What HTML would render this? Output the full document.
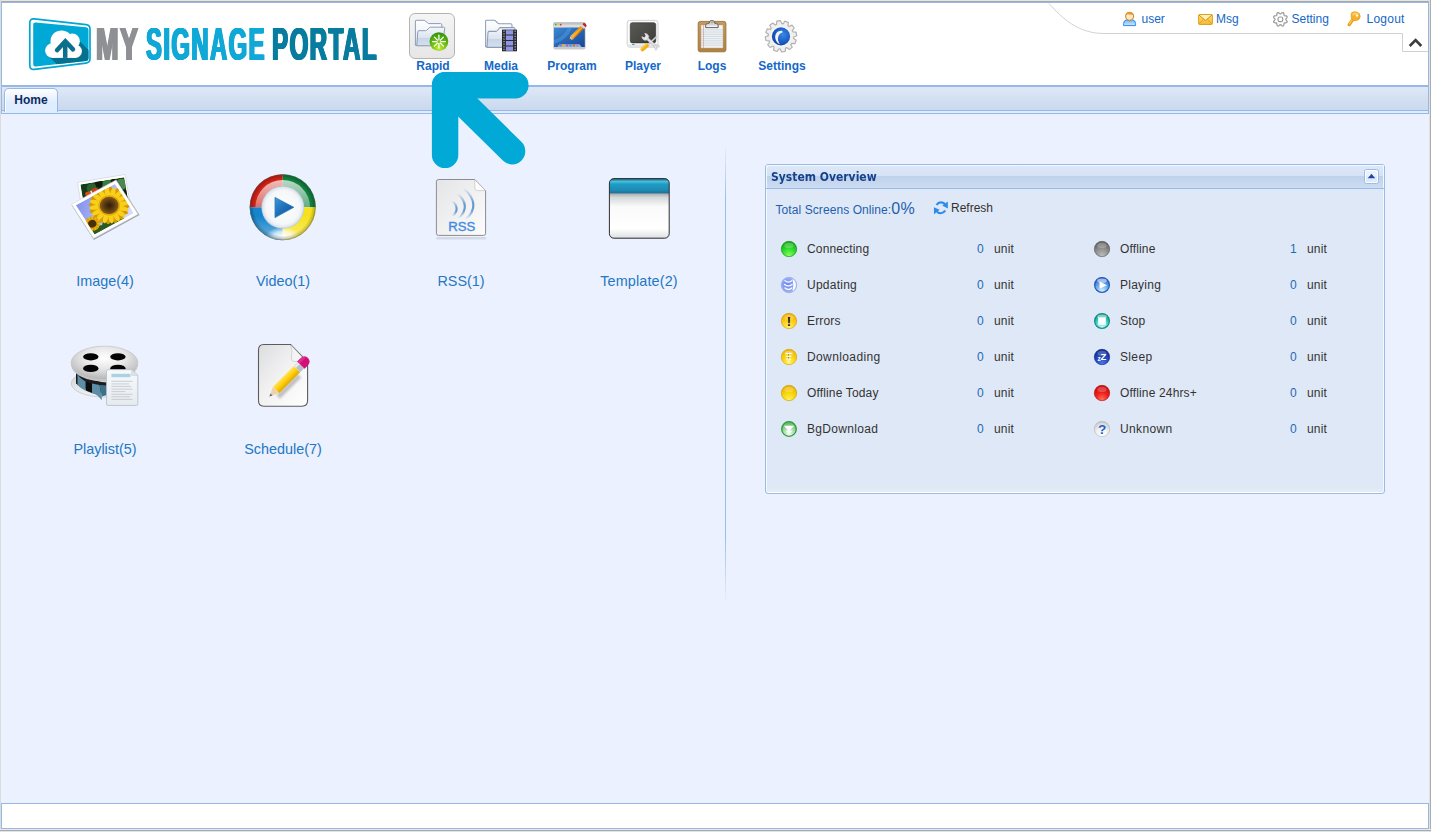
<!DOCTYPE html>
<html lang="en">
<head>
<meta charset="utf-8">
<title>My Signage Portal</title>
<style>
html,body{margin:0;padding:0;}
body{width:1431px;height:832px;overflow:hidden;position:relative;background:#fff;font-family:"Liberation Sans",Arial,sans-serif;font-size:12px;color:#333;}
.abs{position:absolute;}
svg{overflow:visible;}
#frame-top1{left:0;top:0;width:1431px;height:1px;background:#e6e6e6;}
#frame-top2{left:1px;top:1px;width:1430px;height:1px;background:#a9a9a9;}
#frame-left{left:0;top:0;width:1px;height:832px;background:#dcdcdc;}
#frame-right{left:1429px;top:0;width:2px;height:832px;background:linear-gradient(90deg,#e0e0e0 50%,#adadad 50%);}
#frame-bottom{left:0;top:829px;width:1431px;height:3px;background:linear-gradient(#e9e9e9 33.3%,#a9a9a9 33.3%,#a9a9a9 66.6%,#e2e2e2 66.6%);}
#north{left:1px;top:2px;width:1426px;height:82px;border:1px solid #95B8E7;background:#fff;}
#tabhead{left:1px;top:86px;width:1426px;height:24px;border:1px solid #95B8E7;border-width:1px 1px 0 1px;background:linear-gradient(#dee8f7,#c9d8ee);}
#tabline{left:1px;top:110px;width:1428px;height:1px;background:#95B8E7;}
#tabgap{left:1px;top:111px;width:1428px;height:2px;background:#E0ECFF;border-left:1px solid #95B8E7;border-right:1px solid #95B8E7;box-sizing:border-box;}
#tabline2{left:1px;top:113px;width:1428px;height:1px;background:#95B8E7;}
#tab{left:4px;top:88px;width:52px;height:23px;border:1px solid #95B8E7;border-bottom:0;border-radius:5px 5px 0 0;background:linear-gradient(#fff,#E0ECFF 60%);color:#0E2D5F;font-weight:bold;font-size:12px;line-height:23px;text-align:center;box-shadow:inset 1px 1px 0 #fff;}
#center{left:1px;top:114px;width:1428px;height:689px;background:#ebf1fe;}
#south{left:1px;top:803px;width:1426px;height:24px;border:1px solid #95B8E7;background:#fff;}
.nav{color:#1468c8;font-weight:bold;font-size:12px;text-align:center;width:80px;line-height:14px;}
.lnk{color:#2377c4;font-size:14.4px;text-align:center;width:160px;line-height:18px;}
.top{color:#1468c8;font-size:12px;line-height:14px;}
.ttl{font-family:"DejaVu Sans","Liberation Sans",sans-serif;font-weight:bold;font-size:12px;color:#15428B;white-space:nowrap;transform-origin:0 0;transform:scaleX(0.9);}
#divider{left:725px;top:144px;width:1px;height:461px;background:linear-gradient(rgba(149,184,231,0),#9dbbe8 12%,#9dbbe8 85%,rgba(149,184,231,0));}
#panel{left:765px;top:164px;width:618px;height:328px;border-radius:3px;border:1px solid #99BBE8;background:linear-gradient(to top,#fff 0,#fff 1px,#e5ebf4 1px,#e5ebf4 4px,#DFE8F6 4px);box-shadow:inset 1px 0 0 #f4f8fd,inset -1px 0 0 #f4f8fd;}
#phead{left:766px;top:165px;width:618px;height:23px;border-radius:2px 2px 0 0;box-shadow:inset 1px 1px 0 #f4f8fd,inset -1px 0 0 #f4f8fd;background:linear-gradient(#dde8f7 0,#d6e3f5 46%,#bfd2ec 50%,#ccdcf1 100%);border-bottom:1px solid #99BBE8;}
.st{font-size:12px;line-height:14px;color:#333;white-space:nowrap;letter-spacing:0.15px;}
.num{font-size:12px;line-height:14px;color:#1e6bb8;white-space:nowrap;}
.lg{top:18px;font-family:"Liberation Sans",sans-serif;font-weight:bold;font-size:47px;line-height:52px;white-space:nowrap;transform-origin:0 0;transform:scaleX(0.55);text-shadow:1.7px 0 0 currentColor,-1.7px 0 0 currentColor,0.8px 0 0 currentColor,-0.8px 0 0 currentColor;}
</style>
</head>
<body>
<div class="abs" id="north"></div>
<div class="abs" id="tabhead"></div>
<div class="abs" id="tabline"></div>
<div class="abs" id="tabgap"></div>
<div class="abs" id="tabline2"></div>
<div class="abs" id="center"></div>
<div class="abs" id="tab">Home</div>
<div class="abs" id="south"></div>
<div class="abs" id="frame-top1"></div>
<div class="abs" id="frame-top2"></div>
<div class="abs" id="frame-left"></div>
<div class="abs" id="frame-right"></div>
<div class="abs" id="frame-bottom"></div>
<div class="abs nav" style="left:393px;top:59px;">Rapid</div>
<div class="abs nav" style="left:461px;top:59px;">Media</div>
<div class="abs nav" style="left:532px;top:59px;">Program</div>
<div class="abs nav" style="left:603px;top:59px;">Player</div>
<div class="abs nav" style="left:672px;top:59px;">Logs</div>
<div class="abs nav" style="left:742px;top:59px;">Settings</div>
<div class="abs top" style="left:1141.5px;top:12px;">user</div>
<div class="abs top" style="left:1216px;top:12px;">Msg</div>
<div class="abs top" style="left:1291.5px;top:12px;">Setting</div>
<div class="abs top" style="left:1366.5px;top:12px;letter-spacing:0.25px;">Logout</div>
<svg class="abs" style="left:1040px;top:0;" width="391" height="60" viewBox="1040 0 391 60">
<path d="M1049 3.5 C1062 18 1078 33.5 1104 33.5 L1402.5 33.5 L1402.5 51.5 L1428 51.5" fill="none" stroke="#cfd3d6" stroke-width="1"/>
<path d="M1409.7 46 L1415.6 40.1 L1421.3 46" fill="none" stroke="#3d3d3d" stroke-width="2.6"/>
</svg>
<div class="abs lnk" style="left:25px;top:272px;">Image(4)</div>
<div class="abs lnk" style="left:203px;top:272px;">Video(1)</div>
<div class="abs lnk" style="left:381px;top:272px;">RSS(1)</div>
<div class="abs lnk" style="left:559px;top:272px;letter-spacing:0.15px;">Template(2)</div>
<div class="abs lnk" style="left:25px;top:440px;">Playlist(5)</div>
<div class="abs lnk" style="left:203px;top:440px;">Schedule(7)</div>
<div class="abs" id="divider"></div>
<div class="abs" id="panel"></div>
<div class="abs" id="phead"></div>
<div class="abs ttl" style="left:771px;top:170px;line-height:15px;">System Overview</div>
<div class="abs" style="left:775.5px;top:201px;font-size:12px;line-height:16px;color:#1e5fb0;white-space:nowrap;letter-spacing:0.08px;">Total Screens Online:<span style="font-size:16px;letter-spacing:0.3px;">0%</span></div>
<div class="abs" style="left:951px;top:201px;font-size:12px;line-height:14px;color:#333;">Refresh</div>
<div class="abs st" style="left:807px;top:242px;">Connecting</div>
<div class="abs num" style="left:977px;top:242px;">0</div>
<div class="abs st" style="left:994px;top:242px;">unit</div>
<div class="abs st" style="left:1120px;top:242px;">Offline</div>
<div class="abs num" style="left:1290px;top:242px;">1</div>
<div class="abs st" style="left:1307px;top:242px;">unit</div>
<div class="abs st" style="left:807px;top:278px;letter-spacing:0.25px;">Updating</div>
<div class="abs num" style="left:977px;top:278px;">0</div>
<div class="abs st" style="left:994px;top:278px;">unit</div>
<div class="abs st" style="left:1120px;top:278px;letter-spacing:0.25px;">Playing</div>
<div class="abs num" style="left:1290px;top:278px;">0</div>
<div class="abs st" style="left:1307px;top:278px;">unit</div>
<div class="abs st" style="left:807px;top:314px;">Errors</div>
<div class="abs num" style="left:977px;top:314px;">0</div>
<div class="abs st" style="left:994px;top:314px;">unit</div>
<div class="abs st" style="left:1120px;top:314px;">Stop</div>
<div class="abs num" style="left:1290px;top:314px;">0</div>
<div class="abs st" style="left:1307px;top:314px;">unit</div>
<div class="abs st" style="left:807px;top:350px;letter-spacing:0.39px;">Downloading</div>
<div class="abs num" style="left:977px;top:350px;">0</div>
<div class="abs st" style="left:994px;top:350px;">unit</div>
<div class="abs st" style="left:1120px;top:350px;letter-spacing:0.35px;">Sleep</div>
<div class="abs num" style="left:1290px;top:350px;">0</div>
<div class="abs st" style="left:1307px;top:350px;">unit</div>
<div class="abs st" style="left:807px;top:386px;">Offline Today</div>
<div class="abs num" style="left:977px;top:386px;">0</div>
<div class="abs st" style="left:994px;top:386px;">unit</div>
<div class="abs st" style="left:1120px;top:386px;">Offline 24hrs+</div>
<div class="abs num" style="left:1290px;top:386px;">0</div>
<div class="abs st" style="left:1307px;top:386px;">unit</div>
<div class="abs st" style="left:807px;top:422px;letter-spacing:0.31px;">BgDownload</div>
<div class="abs num" style="left:977px;top:422px;">0</div>
<div class="abs st" style="left:994px;top:422px;">unit</div>
<div class="abs st" style="left:1120px;top:422px;letter-spacing:0.35px;">Unknown</div>
<div class="abs num" style="left:1290px;top:422px;">0</div>
<div class="abs st" style="left:1307px;top:422px;">unit</div>
<svg class="abs" style="left:60px;top:160px;" width="720" height="260" viewBox="60 160 720 260">
<defs>
<clipPath id="ph1"><rect x="3" y="3" width="43.4" height="35.7"/></clipPath>
<clipPath id="ph2"><rect x="2.5" y="2.5" width="44.4" height="36"/></clipPath>
<linearGradient id="sky" x1="0" y1="0" x2="1" y2="1"><stop offset="0" stop-color="#8492ee"/><stop offset="0.6" stop-color="#b9c2f8"/><stop offset="1" stop-color="#d9defb"/></linearGradient>
<radialGradient id="sunc" cx="0.5" cy="0.5" r="0.5"><stop offset="0" stop-color="#2e1c08"/><stop offset="0.55" stop-color="#5a3a12"/><stop offset="1" stop-color="#8a5c14"/></radialGradient>
<radialGradient id="vdisc" cx="0.5" cy="0.5" r="0.5"><stop offset="0" stop-color="#ffffff"/><stop offset="0.8" stop-color="#f4f6f8"/><stop offset="0.93" stop-color="#dfe7ee"/><stop offset="1" stop-color="#b7c9dc"/></radialGradient>
<radialGradient id="vedge" cx="0.5" cy="0.5" r="0.5"><stop offset="0.86" stop-color="#000" stop-opacity="0"/><stop offset="1" stop-color="#000" stop-opacity="0.28"/></radialGradient>
<linearGradient id="vgloss" x1="0" y1="0" x2="0" y2="1"><stop offset="0" stop-color="#fff" stop-opacity="0.7"/><stop offset="1" stop-color="#fff" stop-opacity="0.35"/></linearGradient>
<radialGradient id="vglow" cx="0.5" cy="0.5" r="0.5"><stop offset="0" stop-color="#fff" stop-opacity="0.95"/><stop offset="0.5" stop-color="#fff" stop-opacity="0.7"/><stop offset="1" stop-color="#fff" stop-opacity="0"/></radialGradient><linearGradient id="vbot" x1="0" y1="0" x2="0" y2="1"><stop offset="0" stop-color="#fff" stop-opacity="0"/><stop offset="1" stop-color="#fff" stop-opacity="0.9"/></linearGradient>
<linearGradient id="vtri" x1="0" y1="0" x2="1" y2="1"><stop offset="0" stop-color="#3d9ad8"/><stop offset="0.5" stop-color="#1f6db8"/><stop offset="1" stop-color="#164f96"/></linearGradient>
<clipPath id="vring"><path d="M282.7 174.2 a33 33 0 1 0 0.01 0 Z M282.7 186.4 a20.8 20.8 0 1 1 -0.01 0 Z" clip-rule="evenodd"/></clipPath>
<linearGradient id="rsspg" x1="0" y1="0" x2="1" y2="1"><stop offset="0" stop-color="#e4e5e6"/><stop offset="0.6" stop-color="#f3f3f4"/><stop offset="1" stop-color="#fcfcfc"/></linearGradient>
<linearGradient id="rssarc" x1="0" y1="0" x2="0" y2="1"><stop offset="0" stop-color="#5b95d0" stop-opacity="0"/><stop offset="0.45" stop-color="#4f8ccb" stop-opacity="1"/><stop offset="0.7" stop-color="#4f8ccb" stop-opacity="1"/><stop offset="1" stop-color="#5b95d0" stop-opacity="0"/></linearGradient>
<linearGradient id="tplbar" x1="0" y1="0" x2="0" y2="1"><stop offset="0" stop-color="#1c5f78"/><stop offset="0.13" stop-color="#2a86a4"/><stop offset="0.22" stop-color="#46c0de"/><stop offset="0.4" stop-color="#1f9cc4"/><stop offset="0.8" stop-color="#1b8ab4"/><stop offset="1" stop-color="#206e92"/></linearGradient>
<linearGradient id="tplbody" x1="0" y1="0" x2="0" y2="1"><stop offset="0" stop-color="#9aa0a4"/><stop offset="0.1" stop-color="#d4d7d9"/><stop offset="0.3" stop-color="#fafafa"/><stop offset="0.78" stop-color="#ffffff"/><stop offset="1" stop-color="#d9dcdf"/></linearGradient>
<clipPath id="tplclip"><rect x="609.4" y="178.6" width="59.8" height="59.6" rx="4.5"/></clipPath>
<radialGradient id="reel" cx="0.5" cy="0.35" r="0.65"><stop offset="0" stop-color="#ffffff"/><stop offset="0.5" stop-color="#e6e6e6"/><stop offset="1" stop-color="#b4b4b4"/></radialGradient>
<linearGradient id="reel2" x1="0" y1="0" x2="0" y2="1"><stop offset="0" stop-color="#cfcfcf"/><stop offset="1" stop-color="#f2f2f2"/></linearGradient>
<linearGradient id="docg" x1="0" y1="0" x2="0" y2="1"><stop offset="0" stop-color="#f7f9fb"/><stop offset="1" stop-color="#e6ebf0"/></linearGradient>
<linearGradient id="schpg" x1="0" y1="0" x2="1" y2="1"><stop offset="0" stop-color="#dcdddf"/><stop offset="0.45" stop-color="#f1f1f2"/><stop offset="1" stop-color="#ffffff"/></linearGradient>
<filter id="blur1" x="-20%" y="-100%" width="140%" height="300%"><feGaussianBlur stdDeviation="1.3"/></filter><linearGradient id="pen2" x1="0" y1="0" x2="0" y2="1"><stop offset="0" stop-color="#ffe45a"/><stop offset="0.5" stop-color="#ffcf0a"/><stop offset="1" stop-color="#e0a800"/></linearGradient>
</defs>

<!-- IMAGE -->
<g transform="translate(77.5,182.4) rotate(-9.4)">
<rect x="0" y="0" width="48.3" height="40" fill="#fff" stroke="#c9c9c9" stroke-width="0.5"/>
<g clip-path="url(#ph2)">
<rect x="2.5" y="2.5" width="44.4" height="36" fill="#143a18"/>
<circle cx="29" cy="7.5" r="5.5" fill="#3a7a40"/><circle cx="43" cy="9" r="5.5" fill="#4a8a50"/><circle cx="13" cy="8" r="5" fill="#2b6030"/><circle cx="21" cy="5" r="3.6" fill="#0a200c"/><circle cx="36" cy="5" r="3" fill="#0a200c"/><circle cx="45" cy="20" r="5" fill="#0c240e"/>
<ellipse cx="8.6" cy="13.2" rx="3" ry="2.6" fill="#e0481a"/><ellipse cx="16" cy="10.6" rx="3.4" ry="2.4" fill="#d23c14"/><rect x="11.4" y="10.4" width="1.5" height="4" fill="#f4f4f4" transform="rotate(-15 12 12)"/>
</g>
</g>
<g transform="matrix(0.9028 -0.4929 0.5276 0.8213 71.5 204.3)">
<rect x="-0.4" y="1.2" width="50.6" height="41.9" fill="#000" opacity="0.32"/>
<rect x="0" y="0" width="49.4" height="41.7" fill="#fff" stroke="#cfcfcf" stroke-width="0.5"/>
<g clip-path="url(#ph1)">
<rect x="3" y="3" width="43.4" height="35.7" fill="url(#sky)"/>
<path d="M3 38.7 L3 34 Q9 30 14 34 Q18 28 24 33 Q30 30 36 38.7 Z" fill="#2c5a1c"/>
<g fill="#d89a00"><ellipse cx="43.7" cy="22.2" rx="6.2" ry="2.5" transform="rotate(11 43.7 22.2)"/><ellipse cx="41.6" cy="27.1" rx="6.2" ry="2.5" transform="rotate(34 41.6 27.1)"/><ellipse cx="37.9" cy="30.9" rx="6.2" ry="2.5" transform="rotate(56 37.9 30.9)"/><ellipse cx="33.0" cy="32.9" rx="6.2" ry="2.5" transform="rotate(78 33.0 32.9)"/><ellipse cx="27.7" cy="33.0" rx="6.2" ry="2.5" transform="rotate(101 27.7 33.0)"/><ellipse cx="22.8" cy="30.9" rx="6.2" ry="2.5" transform="rotate(124 22.8 30.9)"/><ellipse cx="19.0" cy="27.2" rx="6.2" ry="2.5" transform="rotate(146 19.0 27.2)"/><ellipse cx="17.0" cy="22.3" rx="6.2" ry="2.5" transform="rotate(168 17.0 22.3)"/><ellipse cx="16.9" cy="17.0" rx="6.2" ry="2.5" transform="rotate(191 16.9 17.0)"/><ellipse cx="19.0" cy="12.1" rx="6.2" ry="2.5" transform="rotate(214 19.0 12.1)"/><ellipse cx="22.7" cy="8.3" rx="6.2" ry="2.5" transform="rotate(236 22.7 8.3)"/><ellipse cx="27.6" cy="6.3" rx="6.2" ry="2.5" transform="rotate(258 27.6 6.3)"/><ellipse cx="32.9" cy="6.2" rx="6.2" ry="2.5" transform="rotate(281 32.9 6.2)"/><ellipse cx="37.8" cy="8.3" rx="6.2" ry="2.5" transform="rotate(304 37.8 8.3)"/><ellipse cx="41.6" cy="12.0" rx="6.2" ry="2.5" transform="rotate(326 41.6 12.0)"/><ellipse cx="43.6" cy="16.9" rx="6.2" ry="2.5" transform="rotate(348 43.6 16.9)"/></g><g fill="#f8d01a"><ellipse cx="43.3" cy="19.6" rx="6" ry="2.4" transform="rotate(0 43.3 19.6)"/><ellipse cx="42.3" cy="24.6" rx="6" ry="2.4" transform="rotate(22 42.3 24.6)"/><ellipse cx="39.5" cy="28.8" rx="6" ry="2.4" transform="rotate(45 39.5 28.8)"/><ellipse cx="35.3" cy="31.6" rx="6" ry="2.4" transform="rotate(68 35.3 31.6)"/><ellipse cx="30.3" cy="32.6" rx="6" ry="2.4" transform="rotate(90 30.3 32.6)"/><ellipse cx="25.3" cy="31.6" rx="6" ry="2.4" transform="rotate(112 25.3 31.6)"/><ellipse cx="21.1" cy="28.8" rx="6" ry="2.4" transform="rotate(135 21.1 28.8)"/><ellipse cx="18.3" cy="24.6" rx="6" ry="2.4" transform="rotate(158 18.3 24.6)"/><ellipse cx="17.3" cy="19.6" rx="6" ry="2.4" transform="rotate(180 17.3 19.6)"/><ellipse cx="18.3" cy="14.6" rx="6" ry="2.4" transform="rotate(202 18.3 14.6)"/><ellipse cx="21.1" cy="10.4" rx="6" ry="2.4" transform="rotate(225 21.1 10.4)"/><ellipse cx="25.3" cy="7.6" rx="6" ry="2.4" transform="rotate(248 25.3 7.6)"/><ellipse cx="30.3" cy="6.6" rx="6" ry="2.4" transform="rotate(270 30.3 6.6)"/><ellipse cx="35.3" cy="7.6" rx="6" ry="2.4" transform="rotate(292 35.3 7.6)"/><ellipse cx="39.5" cy="10.4" rx="6" ry="2.4" transform="rotate(315 39.5 10.4)"/><ellipse cx="42.3" cy="14.6" rx="6" ry="2.4" transform="rotate(338 42.3 14.6)"/></g><circle cx="30.3" cy="19.6" r="10.6" fill="#e2ac10"/><circle cx="30.3" cy="19.6" r="9" fill="url(#sunc)"/>
<g fill="#f0c010"><ellipse cx="11.8" cy="27.8" rx="2.6" ry="1.2" transform="rotate(0 11.8 27.8)"/><ellipse cx="11.1" cy="30.3" rx="2.6" ry="1.2" transform="rotate(30 11.1 30.3)"/><ellipse cx="9.3" cy="32.1" rx="2.6" ry="1.2" transform="rotate(60 9.3 32.1)"/><ellipse cx="6.8" cy="32.8" rx="2.6" ry="1.2" transform="rotate(90 6.8 32.8)"/><ellipse cx="4.3" cy="32.1" rx="2.6" ry="1.2" transform="rotate(120 4.3 32.1)"/><ellipse cx="2.5" cy="30.3" rx="2.6" ry="1.2" transform="rotate(150 2.5 30.3)"/><ellipse cx="1.8" cy="27.8" rx="2.6" ry="1.2" transform="rotate(180 1.8 27.8)"/><ellipse cx="2.5" cy="25.3" rx="2.6" ry="1.2" transform="rotate(210 2.5 25.3)"/><ellipse cx="4.3" cy="23.5" rx="2.6" ry="1.2" transform="rotate(240 4.3 23.5)"/><ellipse cx="6.8" cy="22.8" rx="2.6" ry="1.2" transform="rotate(270 6.8 22.8)"/><ellipse cx="9.3" cy="23.5" rx="2.6" ry="1.2" transform="rotate(300 9.3 23.5)"/><ellipse cx="11.1" cy="25.3" rx="2.6" ry="1.2" transform="rotate(330 11.1 25.3)"/></g><g fill="#d8a000"><ellipse cx="11.8" cy="29.1" rx="2.6" ry="1.1" transform="rotate(15 11.8 29.1)"/><ellipse cx="10.5" cy="31.5" rx="2.6" ry="1.1" transform="rotate(45 10.5 31.5)"/><ellipse cx="8.1" cy="32.8" rx="2.6" ry="1.1" transform="rotate(75 8.1 32.8)"/><ellipse cx="5.5" cy="32.8" rx="2.6" ry="1.1" transform="rotate(105 5.5 32.8)"/><ellipse cx="3.1" cy="31.5" rx="2.6" ry="1.1" transform="rotate(135 3.1 31.5)"/><ellipse cx="1.8" cy="29.1" rx="2.6" ry="1.1" transform="rotate(165 1.8 29.1)"/><ellipse cx="1.8" cy="26.5" rx="2.6" ry="1.1" transform="rotate(195 1.8 26.5)"/><ellipse cx="3.1" cy="24.1" rx="2.6" ry="1.1" transform="rotate(225 3.1 24.1)"/><ellipse cx="5.5" cy="22.8" rx="2.6" ry="1.1" transform="rotate(255 5.5 22.8)"/><ellipse cx="8.1" cy="22.8" rx="2.6" ry="1.1" transform="rotate(285 8.1 22.8)"/><ellipse cx="10.5" cy="24.1" rx="2.6" ry="1.1" transform="rotate(315 10.5 24.1)"/><ellipse cx="11.8" cy="26.5" rx="2.6" ry="1.1" transform="rotate(345 11.8 26.5)"/></g><circle cx="6.8" cy="27.8" r="3.9" fill="#4a2e0c"/>
</g>
</g>

<!-- VIDEO -->
<g>
<path d="M282.7 207.2 L282.7 174.2 A33 33 0 0 0 249.7 207.2 Z" fill="#cf2116"/>
<path d="M282.7 207.2 L315.7 207.2 A33 33 0 0 0 282.7 174.2 Z" fill="#11803f"/>
<path d="M282.7 207.2 L249.7 207.2 A33 33 0 0 0 282.7 240.2 Z" fill="#1584cc"/>
<path d="M282.7 207.2 L282.7 240.2 A33 33 0 0 0 315.7 207.2 Z" fill="#f6e21c"/>
<g clip-path="url(#vring)">
<path d="M255.4 207.2 A27.3 27.3 0 0 1 310 207.2 Z" fill="url(#vgloss)"/>
<path d="M249 216 L317 216 L317 241 L249 241 Z" fill="url(#vbot)" opacity="0.45"/><ellipse cx="282.7" cy="236" rx="17" ry="9" fill="url(#vglow)"/>
</g>
<circle cx="282.7" cy="207.2" r="33" fill="url(#vedge)"/>
<circle cx="282.7" cy="207.2" r="32.6" fill="none" stroke="#5a6a50" stroke-opacity="0.45" stroke-width="0.8"/>
<circle cx="282.8" cy="207.3" r="21.4" fill="url(#vdisc)"/>
<path d="M275 197.4 L293.8 207.3 L275 217.6 Z" fill="url(#vtri)" stroke="#2a78bf" stroke-width="0.8" stroke-linejoin="round"/>
</g>

<!-- RSS -->
<path d="M437.5 238.2 L485 238.2" stroke="#c9cfdc" stroke-width="2.4" stroke-linecap="round" opacity="0.7"/>
<path d="M438.5 179.5 L474.8 179.5 L485.6 190.6 L485.6 233.2 Q485.6 235.4 483.4 235.4 L438.5 235.4 Q436.4 235.4 436.4 233.2 L436.4 181.6 Q436.4 179.5 438.5 179.5 Z" fill="url(#rsspg)" stroke="#8c8c8c" stroke-width="1"/>
<path d="M474.8 179.8 L474.8 188 Q474.8 190.6 477.6 190.6 L485.4 190.6 Z" fill="#fdfdfd" stroke="#b9b9b9" stroke-width="0.6"/>
<g fill="none" stroke="url(#rssarc)" stroke-linecap="round" opacity="0.85">
<path d="M452.2 200.6 Q460.8 208.6 452.6 216.4" stroke-width="2.1"/>
<path d="M457.6 193.4 Q471.6 206.4 458.6 218.4" stroke-width="2.2"/>
<path d="M463.4 188 Q482.2 204.8 465.6 219.6" stroke-width="2.2"/>
</g>
<text x="461.7" y="231.2" text-anchor="middle" font-family="Liberation Sans, Arial, sans-serif" font-size="13.2" fill="#3f8be2" stroke="#3f8be2" stroke-width="0.35">RSS</text>

<!-- TEMPLATE -->
<g clip-path="url(#tplclip)">
<rect x="609" y="178" width="61" height="61" fill="url(#tplbody)"/>
<rect x="609" y="192.6" width="61" height="46.4" fill="url(#tplbody)"/>
<rect x="609" y="178" width="61" height="15.4" fill="url(#tplbar)"/>
</g>
<rect x="609.4" y="178.6" width="59.8" height="59.6" rx="4.5" fill="none" stroke="#2e2e2e" stroke-width="1"/>

<!-- PLAYLIST -->
<ellipse cx="104.5" cy="383.5" rx="33.2" ry="13.6" fill="url(#reel2)" stroke="#b9b9b9" stroke-width="0.6"/>
<path d="M76 372 L76 383.5 Q84 392 100 395.5 L100 384 Q84 381 76 372 Z" fill="#4f7d94"/>
<path d="M76 372 Q90 382 112 383 L112 394 Q92 394 76 383.5 Z" fill="#1c1c1e"/>
<path d="M77.5 374.5 Q80 378.5 85.5 381.5 L85.5 390.5 Q80 388 77.5 384 Z" fill="#5d8ea8"/>
<path d="M92 383.5 L99.5 385 L101.8 396.5 L101.8 400.2 Q97 394 92 392.8 Z" fill="#5d8ea8"/>
<path d="M86 381.8 L92 383.6 L92 392.8 L86 390.6 Z" fill="#0e0e10"/>
<path d="M99.5 385 L107 385.5 L107 395 L101.8 396.5 Z" fill="#41708a"/>
<ellipse cx="104.5" cy="362.9" rx="33.4" ry="16.8" fill="url(#reel)" stroke="#bdbdbd" stroke-width="0.6"/>
<path d="M71.2 364 A33.4 16.8 0 0 0 137.8 364 L137.8 366 A33.4 16.8 0 0 1 71.2 366 Z" fill="#c4c4c4"/>
<g fill="#050505"><ellipse cx="90.8" cy="356.8" rx="7.7" ry="3.6"/><ellipse cx="117.9" cy="356.8" rx="7.7" ry="3.6"/><ellipse cx="90.8" cy="368.4" rx="7.7" ry="3.6"/><ellipse cx="117.9" cy="368.4" rx="7.7" ry="3.6"/></g>
<path d="M107.8 369.6 L131.6 369.6 L137.8 375.4 L137.8 404 Q137.8 405.4 136.4 405.4 L107.8 405.4 Q106.5 405.4 106.5 404 L106.5 371 Q106.5 369.6 107.8 369.6 Z" fill="url(#docg)" stroke="#b4bcc6" stroke-width="0.8"/>
<path d="M131.6 369.8 L131.6 375.4 L137.6 375.4 Z" fill="#dfe4ea" stroke="#c2c8d0" stroke-width="0.5"/>
<rect x="111.4" y="373.8" width="19" height="3.4" fill="#a9d3e2"/>
<g stroke="#b9bec4" stroke-width="0.7"><path d="M111.4 381.3H132.4M111.4 383.9H129M111.4 386.4H131M111.4 389.1H132.4M111.4 391.6H125.4M111.4 394.3H132.4M111.4 396.8H130M111.4 399.4H132.4"/></g>

<!-- SCHEDULE -->
<path d="M263.6 344.5 L290.6 344.5 L307.6 362 L307.6 400.5 Q307.6 406.2 302 406.2 L263.6 406.2 Q258.5 406.2 258.5 400.5 L258.5 350 Q258.5 344.5 263.6 344.5 Z" fill="url(#schpg)" stroke="#5c5c5c" stroke-width="1.1"/>
<path d="M290.8 345 Q292.8 351 291.4 357.4 Q291 361.8 295.4 361.6 Q301 360.6 307.2 362.2 Z" fill="#f4f4f5" stroke="#bdbdbd" stroke-width="0.6"/>
<g transform="translate(269.4,396.6) rotate(-45)">
<path d="M6 4 L36 4 L36 9 L6 9 Z" fill="#6c6c74" opacity="0.38" filter="url(#blur1)"/>
<path d="M0 0 L9.6 -4.4 L9.6 4.4 Z" fill="#ecd3ac"/>
<path d="M0 0 L3 -1.4 L3 1.4 Z" fill="#6a6a6a"/>
<rect x="9.6" y="-4.4" width="29.4" height="8.8" fill="url(#pen2)"/>
<rect x="39" y="-4.5" width="5.6" height="9" fill="#b9bfcb"/>
<rect x="39" y="-4.5" width="5.6" height="3" fill="#e6e9ee"/>
<path d="M44.6 -5.2 L48 -5.2 Q54.6 -5.2 54.6 0 Q54.6 5.2 48 5.2 L44.6 5.2 Z" fill="#d3107a"/>
<path d="M44.6 -5.2 L48 -5.2 Q52.6 -5.2 53.9 -2 L44.6 -2 Z" fill="#e8409c" opacity="0.6"/>
</g>
</svg>

<svg class="abs" style="left:20px;top:10px;" width="80" height="70" viewBox="20 10 80 70">
<defs><clipPath id="lgclip"><path d="M35.7 22.4 L86 27.2 Q88.5 27.5 88.5 30 L88.5 58.4 Q88.5 60.7 86 61 L35.7 66.5 Q33.2 66.8 33.2 64.3 L33.2 24.8 Q33.2 22.2 35.7 22.4 Z"/></clipPath></defs>
<path d="M34.4 18.9 L86 24.6 Q90 25 90 29 L90 58.8 Q90 62.6 86 63.1 L34.4 69.3 Q29.8 69.9 29.8 65.3 L29.8 23 Q29.8 18.4 34.4 18.9 Z" fill="#fff" stroke="#00a6d4" stroke-width="1.7"/>
<g clip-path="url(#lgclip)">
<rect x="30" y="18" width="62" height="52" fill="#00a8d5"/>
<path d="M76 37.5 L92 53.5 L92 70 L62.5 70 L47.5 55 Z" fill="#06718f"/>
</g>
<g fill="#fff">
<circle cx="61.5" cy="41.4" r="11"/>
<circle cx="72.3" cy="41.2" r="7.6"/>
<circle cx="75.2" cy="51.2" r="6.7"/>
<circle cx="52.4" cy="50.6" r="7.3"/>
<rect x="52.4" y="44" width="22.8" height="13.9"/>
</g>
<g fill="none" stroke="#0b6f8d" stroke-width="4.5">
<path d="M57 50.2 L65.3 41.2 L73 49.4" stroke-linecap="round" stroke-linejoin="miter"/>
<path d="M65.2 42 L65.2 57.9"/>
</g>
</svg>
<div class="abs lg" id="lg1" style="left:96.3px;color:#8e9093;transform:scaleX(0.574);letter-spacing:2.8px;">MY</div>
<div class="abs lg" id="lg2" style="left:146.2px;color:#10a8d6;transform:scaleX(0.506);letter-spacing:2.9px;">SIGNAGE</div>
<div class="abs lg" id="lg3" style="left:272.4px;color:#077c9e;transform:scaleX(0.512);letter-spacing:2.9px;">PORTAL</div>

<!-- Rapid selected box -->
<div class="abs" style="left:409px;top:13px;width:44px;height:44px;border:1px solid #b4b4b4;border-radius:6px;background:linear-gradient(#f5f5f5,#e6e6e6);"></div>
<svg class="abs" style="left:0;top:0;" width="830" height="60" viewBox="0 0 830 60">
<defs>
<linearGradient id="fold1" x1="0" y1="0" x2="0" y2="1"><stop offset="0" stop-color="#ffffff"/><stop offset="1" stop-color="#dfe6f0"/></linearGradient>
<linearGradient id="fold2" x1="0" y1="0" x2="0" y2="1"><stop offset="0" stop-color="#f4f7fb"/><stop offset="0.55" stop-color="#dbe4f0"/><stop offset="0.6" stop-color="#c8d5e6"/><stop offset="1" stop-color="#d6e0ee"/></linearGradient>
<radialGradient id="gball" cx="0.5" cy="0.85" r="0.9"><stop offset="0" stop-color="#c8ee30"/><stop offset="0.45" stop-color="#6cbc14"/><stop offset="1" stop-color="#2a8a0c"/></radialGradient>
<linearGradient id="scr" x1="0" y1="0" x2="1" y2="1"><stop offset="0" stop-color="#3c8ad4"/><stop offset="0.5" stop-color="#2866b6"/><stop offset="1" stop-color="#194894"/></linearGradient>
<linearGradient id="pen1" x1="0" y1="0" x2="1" y2="1"><stop offset="0" stop-color="#ffc448"/><stop offset="0.5" stop-color="#ee8e08"/><stop offset="1" stop-color="#b86200"/></linearGradient>
<linearGradient id="tvs" x1="0" y1="0" x2="1" y2="1"><stop offset="0" stop-color="#5a5a56"/><stop offset="1" stop-color="#3c3c38"/></linearGradient>
<linearGradient id="clipb" x1="0" y1="0" x2="0" y2="1"><stop offset="0" stop-color="#c49a5c"/><stop offset="1" stop-color="#b08040"/></linearGradient>
<radialGradient id="bball" cx="0.6" cy="0.4" r="0.7"><stop offset="0" stop-color="#3a86e8"/><stop offset="0.6" stop-color="#1a5cc4"/><stop offset="1" stop-color="#0e3c94"/></radialGradient>
<g id="folder">
<path d="M0.8 1.2 Q0.8 0.5 1.6 0.5 L9.6 0.5 Q10.4 0.5 11 1.2 L13 3.2 Q13.6 3.8 14.4 3.8 L26 3.8 Q27.2 3.8 27.2 5 L27.2 25.5 L0.8 25.5 Z" fill="url(#fold1)" stroke="#8c9cb6" stroke-width="1"/>
<path d="M2.2 26 L3.2 11.9 Q3.3 10.9 4.3 10.9 L11 10.9 Q12 10.9 12.6 10.1 L14.4 8.1 Q15 7.4 16 7.4 L29 7.4 Q30.2 7.4 30.1 8.6 L28 26 Z" fill="url(#fold2)" stroke="#8c9cb6" stroke-width="1"/>
</g>
</defs>
<!-- Rapid -->
<use href="#folder" x="414.6" y="19.8"/>
<circle cx="438.9" cy="41.6" r="9.4" fill="url(#gball)"/>
<g stroke="#fff" stroke-width="1.3" stroke-linecap="round" opacity="0.95">
<path d="M438.9 35.2 L438.9 48"/><path d="M432.5 41.6 L445.3 41.6"/><path d="M434.4 37.1 L443.4 46.1"/><path d="M443.4 37.1 L434.4 46.1"/>
</g>
<circle cx="438.9" cy="41.6" r="1.5" fill="#7cc81c"/>
<!-- Media -->
<use href="#folder" transform="translate(484.8,19.8) scale(1,1.06)"/>
<rect x="502" y="29.6" width="15" height="21.7" fill="#2a2a2e"/>
<g fill="#8f96e6">
<rect x="505.9" y="30.2" width="7.2" height="4.3"/><rect x="505.9" y="35.5" width="7.2" height="4.5"/><rect x="505.9" y="41" width="7.2" height="4.5"/><rect x="505.9" y="46.5" width="7.2" height="4.3"/>
</g>
<g fill="#8e9098">
<rect x="503.2" y="30.6" width="1.6" height="1.3"/><rect x="503.2" y="33.2" width="1.6" height="1.3"/><rect x="503.2" y="35.8" width="1.6" height="1.3"/><rect x="503.2" y="38.4" width="1.6" height="1.3"/><rect x="503.2" y="41" width="1.6" height="1.3"/><rect x="503.2" y="43.6" width="1.6" height="1.3"/><rect x="503.2" y="46.2" width="1.6" height="1.3"/><rect x="503.2" y="48.8" width="1.6" height="1.3"/>
<rect x="514.4" y="30.6" width="1.6" height="1.3"/><rect x="514.4" y="33.2" width="1.6" height="1.3"/><rect x="514.4" y="35.8" width="1.6" height="1.3"/><rect x="514.4" y="38.4" width="1.6" height="1.3"/><rect x="514.4" y="41" width="1.6" height="1.3"/><rect x="514.4" y="43.6" width="1.6" height="1.3"/><rect x="514.4" y="46.2" width="1.6" height="1.3"/><rect x="514.4" y="48.8" width="1.6" height="1.3"/>
</g>
<!-- Program -->
<rect x="553.2" y="22.2" width="32.4" height="27.2" rx="1.8" fill="#c9c9c9"/>
<rect x="553.2" y="22.2" width="32.4" height="5.6" rx="1.5" fill="#c2c2c2"/><rect x="553.6" y="24.6" width="31.6" height="3" fill="#dedede"/>
<rect x="554" y="27.6" width="30.8" height="19.4" fill="url(#scr)"/>
<path d="M554 40 C562 38 566 32 568 27.6 L572 27.6 C570 34 564 41 554 44 Z" fill="#5aa0e0" opacity="0.45"/>
<path d="M557.5 47 L559.5 44.2 L579.5 44.2 L581.5 47 Z" fill="#9db4d8"/>
<g><rect x="562.5" y="44.3" width="2.2" height="2.2" fill="#f0b020"/><rect x="566" y="44.3" width="2.2" height="2.2" fill="#b060c0"/><rect x="569.4" y="44.3" width="2.2" height="2.2" fill="#4a90e8"/><rect x="572.8" y="44.3" width="2.2" height="2.2" fill="#c07830"/><rect x="576.2" y="44.3" width="2.2" height="2.2" fill="#b088d0"/><rect x="559.4" y="44.3" width="2.2" height="2.2" fill="#6a80c8"/></g>
<circle cx="555.7" cy="24.7" r="0.9" fill="#3cb043"/><circle cx="558.2" cy="24.7" r="0.9" fill="#e8d020"/><circle cx="560.7" cy="24.7" r="0.9" fill="#e03030"/>
<g transform="translate(569.4,40.1) rotate(-44.6)">
<path d="M0 0 L3.6 -2.3 L3.6 2.3 Z" fill="#e8c9a0"/><path d="M0 0 L1.5 -1 L1.5 1 Z" fill="#333"/>
<rect x="3.6" y="-2.1" width="14.5" height="4.2" fill="url(#pen1)"/>
<rect x="3.6" y="-0.6" width="14.5" height="1.2" fill="#ffc040" opacity="0.8"/>
<rect x="18.1" y="-2.4" width="2.4" height="4.8" fill="#d8d8dc"/>
<path d="M20.5 -2.2 L21.6 -2.2 Q23 -2.2 23 0 Q23 2.2 21.6 2.2 L20.5 2.2 Z" fill="#c82020"/>
</g>
<!-- Player -->
<rect x="627.2" y="20.4" width="30.8" height="26.8" rx="2.6" fill="#fbfbfb" stroke="#d2d2d2" stroke-width="1"/>
<path d="M627.5 44.5 L657.7 44.5 L657.7 45.5 Q657.7 47.2 656 47.2 L629.2 47.2 Q627.5 47.2 627.5 45.5 Z" fill="#e4e4e4"/>
<rect x="630.3" y="22.7" width="25.4" height="20.2" rx="2" fill="url(#tvs)" stroke="#2c2c2a" stroke-width="0.6"/>
<rect x="632" y="43.9" width="2.6" height="1.1" rx="0.5" fill="#2aa0e0"/>
<g transform="translate(646.6,45.7) rotate(-42)">
<rect x="-7.4" y="-2" width="9.8" height="4" rx="2" fill="#f4b014"/>
<rect x="-7.4" y="-2" width="9.8" height="1.6" rx="0.8" fill="#ffd24a" opacity="0.7"/>
<rect x="2.4" y="-0.8" width="11.5" height="1.6" fill="#c8ccd0"/>
</g>
<g transform="translate(645.3,36.9) rotate(42)">
<rect x="2" y="-1.25" width="11.4" height="2.5" fill="#dfe1e4" stroke="#a4a7ab" stroke-width="0.4"/>
<circle r="3.4" fill="#e4e6e8" stroke="#a4a7ab" stroke-width="0.4"/>
<path d="M-4.2 -2.2 L-0.4 -1.1 L-0.4 1.1 L-4.2 2.2 Z" fill="#4b4b47"/>
<path d="M13 -1.25 L16.8 -2.9 L16.8 -1 L14.9 0 L16.8 1 L16.8 2.9 L13 1.25 Z" fill="#e4e6e8" stroke="#a4a7ab" stroke-width="0.4"/>
</g>
<!-- Logs -->
<rect x="698.2" y="21.4" width="27.7" height="30.4" rx="2" fill="url(#clipb)" stroke="#98703a" stroke-width="0.9"/>
<rect x="700.9" y="24.9" width="22.2" height="23.2" fill="#f1f3f5" stroke="#a88a5c" stroke-width="0.5"/>
<g stroke="#b7c7d3" stroke-width="0.55"><path d="M701 29.8H723M701 32H723M701 34.2H723M701 36.4H723M701 38.6H723M701 40.8H723M701 43H723M701 45.2H723"/></g>
<path d="M703.5 25V48" stroke="#e08a8a" stroke-width="0.6"/>
<path d="M705.6 27.6 L705.6 25.4 Q705.6 23.8 707.4 23.6 L709.2 23.2 Q709.4 20.4 711.9 20.4 Q714.4 20.4 714.6 23.2 L716.4 23.6 Q718.2 23.8 718.2 25.4 L718.2 27.6 Z" fill="#d2d4d6" stroke="#56585c" stroke-width="0.9"/>
<circle cx="711.9" cy="22.6" r="1" fill="#c8a470"/>
<rect x="706.6" y="25.6" width="10.6" height="1.4" fill="#f4f4f4"/>
<!-- Settings -->
<g transform="translate(781,36.3)">
<path id="gear" fill="#efefef" stroke="#b2b2b2" stroke-width="1.2" stroke-linejoin="round" d="M12.6 1.4 L12.5 2.0 L15.2 3.9 L13.8 7.4 L10.6 7.0 L10.2 7.5 L9.8 8.0 L11.2 11.0 L8.3 13.3 L5.7 11.3 L5.1 11.6 L4.5 11.9 L4.2 15.1 L0.5 15.7 L-0.7 12.7 L-1.4 12.6 L-2.0 12.5 L-3.9 15.2 L-7.4 13.8 L-7.0 10.6 L-7.5 10.2 L-8.0 9.8 L-11.0 11.2 L-13.3 8.3 L-11.3 5.7 L-11.6 5.1 L-11.9 4.5 L-15.1 4.2 L-15.7 0.5 L-12.7 -0.7 L-12.6 -1.4 L-12.5 -2.0 L-15.2 -3.9 L-13.8 -7.4 L-10.6 -7.0 L-10.2 -7.5 L-9.8 -8.0 L-11.2 -11.0 L-8.3 -13.3 L-5.7 -11.3 L-5.1 -11.6 L-4.5 -11.9 L-4.2 -15.1 L-0.5 -15.7 L0.7 -12.7 L1.4 -12.6 L2.0 -12.5 L3.9 -15.2 L7.4 -13.8 L7.0 -10.6 L7.5 -10.2 L8.0 -9.8 L11.0 -11.2 L13.3 -8.3 L11.3 -5.7 L11.6 -5.1 L11.9 -4.5 L15.1 -4.2 L15.7 -0.5 L12.7 0.7 Z"/>
<circle r="10.4" fill="#f6f6f6"/>
<circle r="9.1" cy="0.1" fill="url(#bball)"/>
<path d="M1.2 -5.6 C-3.5 -6 -6.6 -2.4 -5.6 2.4 C-5 5 -3.4 7 -1 8 C-3 5.4 -3.6 2.6 -2.6 0 C-1.8 -2 -0.6 -3.2 1.6 -3.8 Z" fill="#f2f2ee"/>
</g>
</svg>

<svg class="abs" style="left:760px;top:190px;" width="640" height="300" viewBox="760 190 640 300"><defs><radialGradient id="bGreen" cx="0.5" cy="0.78" r="0.75" fx="0.5" fy="0.95"><stop offset="0" stop-color="#8cff62"/><stop offset="0.55" stop-color="#2edc2e"/><stop offset="1" stop-color="#18a418"/></radialGradient><radialGradient id="bUpd" cx="0.5" cy="0.78" r="0.75" fx="0.5" fy="0.95"><stop offset="0" stop-color="#e4eaff"/><stop offset="0.55" stop-color="#a6b8f6"/><stop offset="1" stop-color="#8aa0ee"/></radialGradient><radialGradient id="bUpd2" cx="0.42" cy="0.5" r="0.6"><stop offset="0" stop-color="#6c88f2"/><stop offset="0.6" stop-color="#8ea4f4"/><stop offset="1" stop-color="#b4c2f6"/></radialGradient><radialGradient id="bErr" cx="0.5" cy="0.78" r="0.75" fx="0.5" fy="0.95"><stop offset="0" stop-color="#fff27a"/><stop offset="0.55" stop-color="#ffce1c"/><stop offset="1" stop-color="#f2b000"/></radialGradient><radialGradient id="bDl" cx="0.5" cy="0.78" r="0.75" fx="0.5" fy="0.95"><stop offset="0" stop-color="#fff66a"/><stop offset="0.55" stop-color="#fcd610"/><stop offset="1" stop-color="#ecb400"/></radialGradient><radialGradient id="bOff" cx="0.5" cy="0.78" r="0.75" fx="0.5" fy="0.95"><stop offset="0" stop-color="#fff25a"/><stop offset="0.55" stop-color="#f8d408"/><stop offset="1" stop-color="#e4b000"/></radialGradient><radialGradient id="bBg" cx="0.5" cy="0.78" r="0.75" fx="0.5" fy="0.95"><stop offset="0" stop-color="#f2fff2"/><stop offset="0.55" stop-color="#a6dca8"/><stop offset="1" stop-color="#58b462"/></radialGradient><radialGradient id="bGray" cx="0.5" cy="0.78" r="0.75" fx="0.5" fy="0.95"><stop offset="0" stop-color="#bebebe"/><stop offset="0.55" stop-color="#8e8e8e"/><stop offset="1" stop-color="#5e5e5e"/></radialGradient><radialGradient id="bPlay" cx="0.5" cy="0.78" r="0.75" fx="0.5" fy="0.95"><stop offset="0" stop-color="#e0faff"/><stop offset="0.55" stop-color="#62aef0"/><stop offset="1" stop-color="#2a62cc"/></radialGradient><radialGradient id="bStop" cx="0.5" cy="0.78" r="0.75" fx="0.5" fy="0.95"><stop offset="0" stop-color="#c8fffa"/><stop offset="0.55" stop-color="#44d6cc"/><stop offset="1" stop-color="#12958a"/></radialGradient><radialGradient id="bSleep" cx="0.5" cy="0.78" r="0.75" fx="0.5" fy="0.95"><stop offset="0" stop-color="#4a78e8"/><stop offset="0.55" stop-color="#2448c0"/><stop offset="1" stop-color="#10288c"/></radialGradient><radialGradient id="bRed" cx="0.5" cy="0.78" r="0.75" fx="0.5" fy="0.95"><stop offset="0" stop-color="#ff7258"/><stop offset="0.55" stop-color="#ee1c1c"/><stop offset="1" stop-color="#c40c0c"/></radialGradient><radialGradient id="bUnk" cx="0.5" cy="0.78" r="0.75" fx="0.5" fy="0.95"><stop offset="0" stop-color="#ffffff"/><stop offset="0.55" stop-color="#f0f0f0"/><stop offset="1" stop-color="#c4c4c4"/></radialGradient></defs>
<circle cx="789" cy="249" r="7.7" fill="url(#bGreen)" stroke="#0a8a0a" stroke-width="0.6"/><ellipse cx="789" cy="245.4" rx="4.6" ry="2.6" fill="#fff" opacity="0.22"/>
<circle cx="789" cy="285" r="7.8" fill="url(#bUpd2)" stroke="#8a9fe6" stroke-width="0.5"/>
<path d="M792.6 278.8 A7.5 7.5 0 0 1 792.6 291.2 A32 32 0 0 0 792.6 278.8 Z" fill="#fff" opacity="0.95"/>
<g fill="none" stroke="#fff" stroke-width="1.25" stroke-linecap="round"><path d="M785 280.6 Q788.4 283.6 791.8 280.6"/><path d="M784.6 284.4 Q788.4 287.4 792 284.4"/><path d="M785 288 Q788.4 291 791.8 288"/></g>
<circle cx="789" cy="321" r="7.7" fill="url(#bErr)" stroke="#d49a00" stroke-width="0.6"/><ellipse cx="789" cy="317.4" rx="4.6" ry="2.6" fill="#fff" opacity="0.22"/>
<text x="789" y="325.6" text-anchor="middle" font-family="Liberation Sans, Arial, sans-serif" font-weight="bold" font-size="13" fill="#1a1a1a">!</text>
<circle cx="789" cy="357" r="7.7" fill="url(#bDl)" stroke="#d4a000" stroke-width="0.6"/><ellipse cx="789" cy="353.4" rx="4.6" ry="2.6" fill="#fff" opacity="0.22"/>
<path d="M788.5 352.6V360.4" stroke="#9a8a40" stroke-width="1"/><g stroke="#fff" stroke-width="1.25"><path d="M785.6 353.4H791.6M785.8 356.4H791.4M786.2 359.2H791"/></g><path d="M786.8 360.6 L790.4 360.6 L788.6 362.6 Z" fill="#fff"/>
<circle cx="789" cy="393" r="7.7" fill="url(#bOff)" stroke="#c89c00" stroke-width="0.6"/><ellipse cx="789" cy="389.4" rx="4.6" ry="2.6" fill="#fff" opacity="0.22"/>
<circle cx="789" cy="429" r="7.3" fill="url(#bBg)" stroke="#2f9a3a" stroke-width="1.3"/>
<path d="M783.8 425.8 L794.2 425.8 L789 431.2 Z" fill="#fff"/><path d="M785.4 430.4 L792.6 430.4 L789 434.6 Z" fill="#fff"/>
<circle cx="1102" cy="249" r="7.7" fill="url(#bGray)" stroke="#5a5a5a" stroke-width="0.6"/><ellipse cx="1102" cy="245.4" rx="4.6" ry="2.6" fill="#fff" opacity="0.22"/>
<circle cx="1102" cy="285" r="7.4" fill="url(#bPlay)" stroke="#2456bc" stroke-width="1.2"/><ellipse cx="1102" cy="280.8" rx="4.8" ry="2.2" fill="#fff" opacity="0.5"/>
<path d="M1099.2 281.2 L1106.8 285.2 L1099.2 289 Z" fill="#fff"/><path d="M1099.2 281.2 L1099.2 289" stroke="#a8a8a8" stroke-width="0.7"/>
<circle cx="1102" cy="321" r="7.4" fill="url(#bStop)" stroke="#128c82" stroke-width="1.2"/><ellipse cx="1102" cy="316.8" rx="4.8" ry="2.2" fill="#fff" opacity="0.45"/>
<rect x="1098.2" y="317.4" width="7.6" height="7.4" fill="#fff"/>
<circle cx="1102" cy="357" r="7.7" fill="url(#bSleep)" stroke="#0e2482" stroke-width="0.6"/><ellipse cx="1102" cy="353.4" rx="4.6" ry="2.6" fill="#fff" opacity="0.22"/>
<text x="1097.4" y="361.4" font-family="Liberation Sans, Arial, sans-serif" font-weight="bold" font-size="6.5" fill="#fff">z</text><text x="1100.6" y="359.6" font-family="Liberation Sans, Arial, sans-serif" font-weight="bold" font-size="9.5" fill="#fff">Z</text>
<circle cx="1102" cy="393" r="7.7" fill="url(#bRed)" stroke="#b00c0c" stroke-width="0.6"/><ellipse cx="1102" cy="389.4" rx="4.6" ry="2.6" fill="#fff" opacity="0.22"/>
<circle cx="1102" cy="429" r="7.7" fill="url(#bUnk)" stroke="#b4b4b4" stroke-width="0.6"/><ellipse cx="1102" cy="425.4" rx="4.6" ry="2.6" fill="#fff" opacity="0.22"/>
<text x="1102" y="433.6" text-anchor="middle" font-family="Liberation Sans, Arial, sans-serif" font-weight="bold" font-size="13.5" fill="#1c5fd4">?</text>
<g fill="none" stroke="#2b8cec" stroke-width="2.1" stroke-linecap="butt">
<path d="M936.6 205 A5.2 5.2 0 0 1 945.4 204.6"/>
<path d="M945.2 210.6 A5.2 5.2 0 0 1 936.4 211"/>
</g>
<path d="M942.2 205.6 L947.8 201.4 L947.9 208.4 Z" fill="#2b8cec"/>
<path d="M939.6 209.8 L934 214.2 L933.9 207.2 Z" fill="#2b8cec"/>
<rect x="1364.5" y="169.5" width="14" height="14" rx="2.2" fill="#fff" stroke="#99bbe8" stroke-width="1"/>
<rect x="1366" y="171" width="11" height="11" fill="#dcebfb"/>
<rect x="1366" y="171" width="11" height="5" fill="#eaf3fd"/>
<path d="M1367.8 178.2 L1371.5 173.8 L1375.2 178.2 Z" fill="#2443a4"/>
</svg>
<svg class="abs" style="left:1120px;top:8px;" width="250" height="22" viewBox="1120 8 250 22">
<defs><linearGradient id="ubody" x1="0" y1="0" x2="0" y2="1"><stop offset="0" stop-color="#6cb6f6"/><stop offset="1" stop-color="#cfe8ff"/></linearGradient>
<linearGradient id="env" x1="0" y1="0" x2="0" y2="1"><stop offset="0" stop-color="#ffe27a"/><stop offset="1" stop-color="#f4b830"/></linearGradient></defs>
<!-- user -->
<path d="M1123.6 25.6 L1123.6 23.6 Q1123.6 20.4 1127 19.6 L1129.6 21 L1132.2 19.6 Q1135.6 20.4 1135.6 23.6 L1135.6 25.6 Z" fill="url(#ubody)" stroke="#2d8cf0" stroke-width="1"/>
<circle cx="1129.6" cy="16.2" r="4" fill="#ffe9c4" stroke="#d48c28" stroke-width="1.1"/>
<path d="M1125.8 15.4 Q1126.4 12.2 1129.6 12.2 Q1132.8 12.2 1133.4 15.4 Q1131 13.8 1129.8 14.8 Q1128 13.6 1125.8 15.4 Z" fill="#e09a30"/>
<!-- msg -->
<rect x="1198.6" y="14.5" width="13.8" height="10" rx="0.8" fill="url(#env)" stroke="#e0a020" stroke-width="1"/>
<path d="M1199 15 L1205.5 20.6 L1212 15 Z" fill="#fff2b8"/><path d="M1199 15 L1205.5 20.6 L1212 15" fill="none" stroke="#d08c12" stroke-width="1"/>
<path d="M1199 24 L1203.6 19.2 M1212 24 L1207.4 19.2" fill="none" stroke="#dca028" stroke-width="0.8"/>
<!-- gear -->
<g transform="translate(1280.4,19.3) rotate(22.5)" fill="none" stroke="#9b9b9b">
<path d="M7.25 0.00 L7.11 0.47 L6.72 0.88 L6.18 1.23 L5.63 1.51 L5.19 1.76 L4.94 2.05 L4.91 2.42 L5.04 2.91 L5.24 3.50 L5.37 4.12 L5.36 4.70 L5.13 5.13 L4.70 5.36 L4.12 5.37 L3.50 5.24 L2.91 5.04 L2.42 4.91 L2.05 4.94 L1.76 5.19 L1.51 5.63 L1.23 6.18 L0.88 6.72 L0.47 7.11 L0.00 7.25 L-0.47 7.11 L-0.88 6.72 L-1.23 6.18 L-1.51 5.63 L-1.76 5.19 L-2.05 4.94 L-2.42 4.91 L-2.91 5.04 L-3.50 5.24 L-4.12 5.37 L-4.70 5.36 L-5.13 5.13 L-5.36 4.70 L-5.37 4.12 L-5.24 3.50 L-5.04 2.91 L-4.91 2.42 L-4.94 2.05 L-5.19 1.76 L-5.63 1.51 L-6.18 1.23 L-6.72 0.88 L-7.11 0.47 L-7.25 0.00 L-7.11 -0.47 L-6.72 -0.88 L-6.18 -1.23 L-5.63 -1.51 L-5.19 -1.76 L-4.94 -2.05 L-4.91 -2.42 L-5.04 -2.91 L-5.24 -3.50 L-5.37 -4.12 L-5.36 -4.70 L-5.13 -5.13 L-4.70 -5.36 L-4.12 -5.37 L-3.50 -5.24 L-2.91 -5.04 L-2.42 -4.91 L-2.05 -4.94 L-1.76 -5.19 L-1.51 -5.63 L-1.23 -6.18 L-0.88 -6.72 L-0.47 -7.11 L-0.00 -7.25 L0.47 -7.11 L0.88 -6.72 L1.23 -6.18 L1.51 -5.63 L1.76 -5.19 L2.05 -4.94 L2.42 -4.91 L2.91 -5.04 L3.50 -5.24 L4.12 -5.37 L4.70 -5.36 L5.13 -5.13 L5.36 -4.70 L5.37 -4.12 L5.24 -3.50 L5.04 -2.91 L4.91 -2.42 L4.94 -2.05 L5.19 -1.76 L5.63 -1.51 L6.18 -1.23 L6.72 -0.88 L7.11 -0.47 Z" stroke-width="1.25" stroke-linejoin="round"/>
<rect x="-2.3" y="-2.3" width="4.6" height="4.6" rx="1.6" stroke-width="1.2" transform="rotate(-22.5)"/>
</g>
<!-- key -->
<g>
<path d="M1353.4 18.6 L1349.2 24.6" stroke="#e89e18" stroke-width="3.4" stroke-linecap="round"/>
<path d="M1353.2 18.2 L1349.4 23.8" stroke="#ffc848" stroke-width="1.3" stroke-linecap="round"/>
<path d="M1351.6 12.8 Q1353.4 11.4 1356.6 12 Q1360.2 13 1360.2 16.4 Q1360 19.8 1356.4 20.6 Q1353.4 21 1352 19.4 Q1350.2 16.4 1351.6 12.8 Z" fill="#f6b22c" stroke="#e49a16" stroke-width="0.7"/>
<path d="M1352.6 13.6 Q1354.4 12.2 1356.6 12.8 Q1358 13.4 1358.6 14.4 Q1355 13.4 1352.4 16 Z" fill="#ffd874" opacity="0.9"/>
<circle cx="1357" cy="15.4" r="1.25" fill="#fffbe8"/>
</g>
</svg>
<svg class="abs" style="left:420px;top:60px;" width="130" height="120" viewBox="420 60 130 120">
<g fill="none" stroke="#00a9d6" stroke-width="26.4" stroke-linecap="round" stroke-linejoin="round">
<path d="M515.4 85.2 L445.1 85.2 L445.1 154.9"/>
<path d="M445.1 85.2 L512.1 151.2"/>
</g>
</svg>
</body>
</html>
